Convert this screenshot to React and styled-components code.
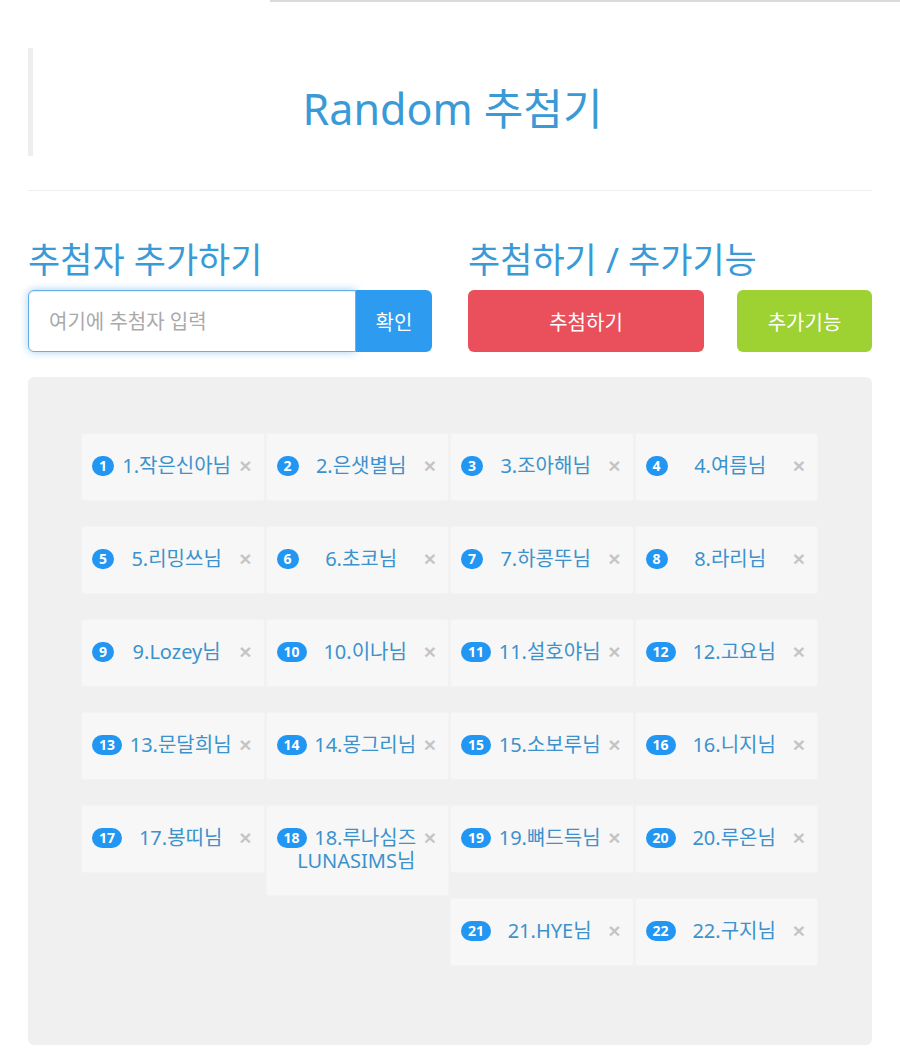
import React from 'react';
import styled, { createGlobalStyle } from 'styled-components';

const GlobalStyle = createGlobalStyle`
  * {
    box-sizing: border-box;
  }
  body {
    margin: 0;
    background: #fff;
    font-family: "Noto Sans", "Noto Sans CJK KR", sans-serif;
  }
`;

const TopBar = styled.div`
  height: 2px;
  margin-left: 270px;
  background: #dadada;
`;

const Page = styled.div`
  padding: 0 28px;
`;

const Header = styled.div`
  margin-top: 46px;
  height: 108px;
  padding-top: 38px;
  border-left: 5px solid #eeeeee;
`;

const Title = styled.h1`
  margin: 0;
  text-align: center;
  font-size: 43px;
  line-height: 46px;
  font-weight: 400;
  color: #3a9ad6;
`;

const Divider = styled.hr`
  margin: 34px 0 0;
  border: 0;
  border-top: 1px solid #eeeeee;
`;

const Columns = styled.div`
  display: grid;
  grid-template-columns: 1fr 1fr;
  column-gap: 36px;
  margin-top: 50px;
`;

const SectionTitle = styled.h2`
  margin: 0 0 12px;
  font-size: 35px;
  line-height: 37px;
  font-weight: 400;
  color: #3a9ad6;
`;

const InputRow = styled.div`
  display: flex;
  height: 62px;
`;

const NameInput = styled.input`
  flex: 1;
  min-width: 0;
  height: 100%;
  padding: 0 20px;
  border: 1px solid #66afe9;
  border-radius: 6px 0 0 6px;
  box-shadow: inset 0 1px 1px rgba(0, 0, 0, 0.075), 0 0 8px rgba(102, 175, 233, 0.6);
  font-family: inherit;
  font-size: 20px;
  color: #555;
  outline: none;
  &::placeholder {
    color: #aaaaaa;
  }
`;

const ConfirmButton = styled.button`
  width: 76px;
  height: 100%;
  border: 0;
  border-radius: 0 6px 6px 0;
  background: #2d9cf0;
  color: #fff;
  font-family: inherit;
  font-size: 20px;
`;

const ActionRow = styled.div`
  display: flex;
  justify-content: space-between;
  height: 62px;
`;

const ActionButton = styled.button`
  width: ${props => props.w}px;
  height: 100%;
  border: 0;
  border-radius: 6px;
  background: ${props => props.bg};
  color: #fff;
  font-family: inherit;
  font-size: 20px;
`;

const Board = styled.div`
  display: flow-root;
  margin-top: 25px;
  padding: 57px 52px 53px 54px;
  background: #f0f0f0;
  border-radius: 6px;
`;

const Card = styled.div`
  float: left;
  width: 181.5px;
  margin: 0 3px 27px 0;
  padding: 20px 12px 23px 10px;
  background: #f7f7f7;
  border-radius: 2px;
  box-shadow: 0 0 0 1px #f3f3f3;
  text-align: center;
  font-size: 20px;
  line-height: 23px;
  color: #3b92cc;
`;

const Badge = styled.span`
  float: left;
  margin-top: 2px;
  height: 20px;
  padding: 0 7px;
  border-radius: 10px;
  background: #2196f3;
  color: #fff;
  font-size: 14px;
  font-weight: 700;
  line-height: 20px;
`;

const Close = styled.span`
  float: right;
  margin-top: 1px;
  font-family: "Liberation Sans", Arial, sans-serif;
  font-size: 21px;
  font-weight: 700;
  line-height: 21px;
  color: #000;
  opacity: 0.2;
`;

const Word = styled.span``;

const names = [
  '작은신아님', '은샛별님', '조아해님', '여름님',
  '리밍쓰님', '초코님', '하콩뚜님', '라리님',
  'Lozey님', '이나님', '설호야님', '고요님',
  '문달희님', '몽그리님', '소보루님', '니지님',
  '봉띠님', '루나심즈 LUNASIMS님', '뼈드득님', '루온님',
  'HYE님', '구지님',
];

const Entry = ({ num, name }) => {
  const words = `${num}.${name}`.split(' ');
  return (
    <Card>
      <Badge>{num}</Badge>
      <Close>×</Close>
      {words.map((word, i) => (
        <React.Fragment key={i}>
          {i > 0 && ' '}
          <Word>{word}</Word>
        </React.Fragment>
      ))}
    </Card>
  );
};

const App = () => (
  <>
    <GlobalStyle />
    <TopBar />
    <Page>
      <Header>
        <Title>Random 추첨기</Title>
      </Header>
      <Divider />
      <Columns>
        <div>
          <SectionTitle>추첨자 추가하기</SectionTitle>
          <InputRow>
            <NameInput placeholder="여기에 추첨자 입력" />
            <ConfirmButton>확인</ConfirmButton>
          </InputRow>
        </div>
        <div>
          <SectionTitle>추첨하기 / 추가기능</SectionTitle>
          <ActionRow>
            <ActionButton w={236} bg="#e9505c">추첨하기</ActionButton>
            <ActionButton w={135} bg="#9dd232">추가기능</ActionButton>
          </ActionRow>
        </div>
      </Columns>
      <Board>
        {names.map((name, i) => (
          <Entry key={i} num={i + 1} name={name} />
        ))}
      </Board>
    </Page>
  </>
);

export default App;
